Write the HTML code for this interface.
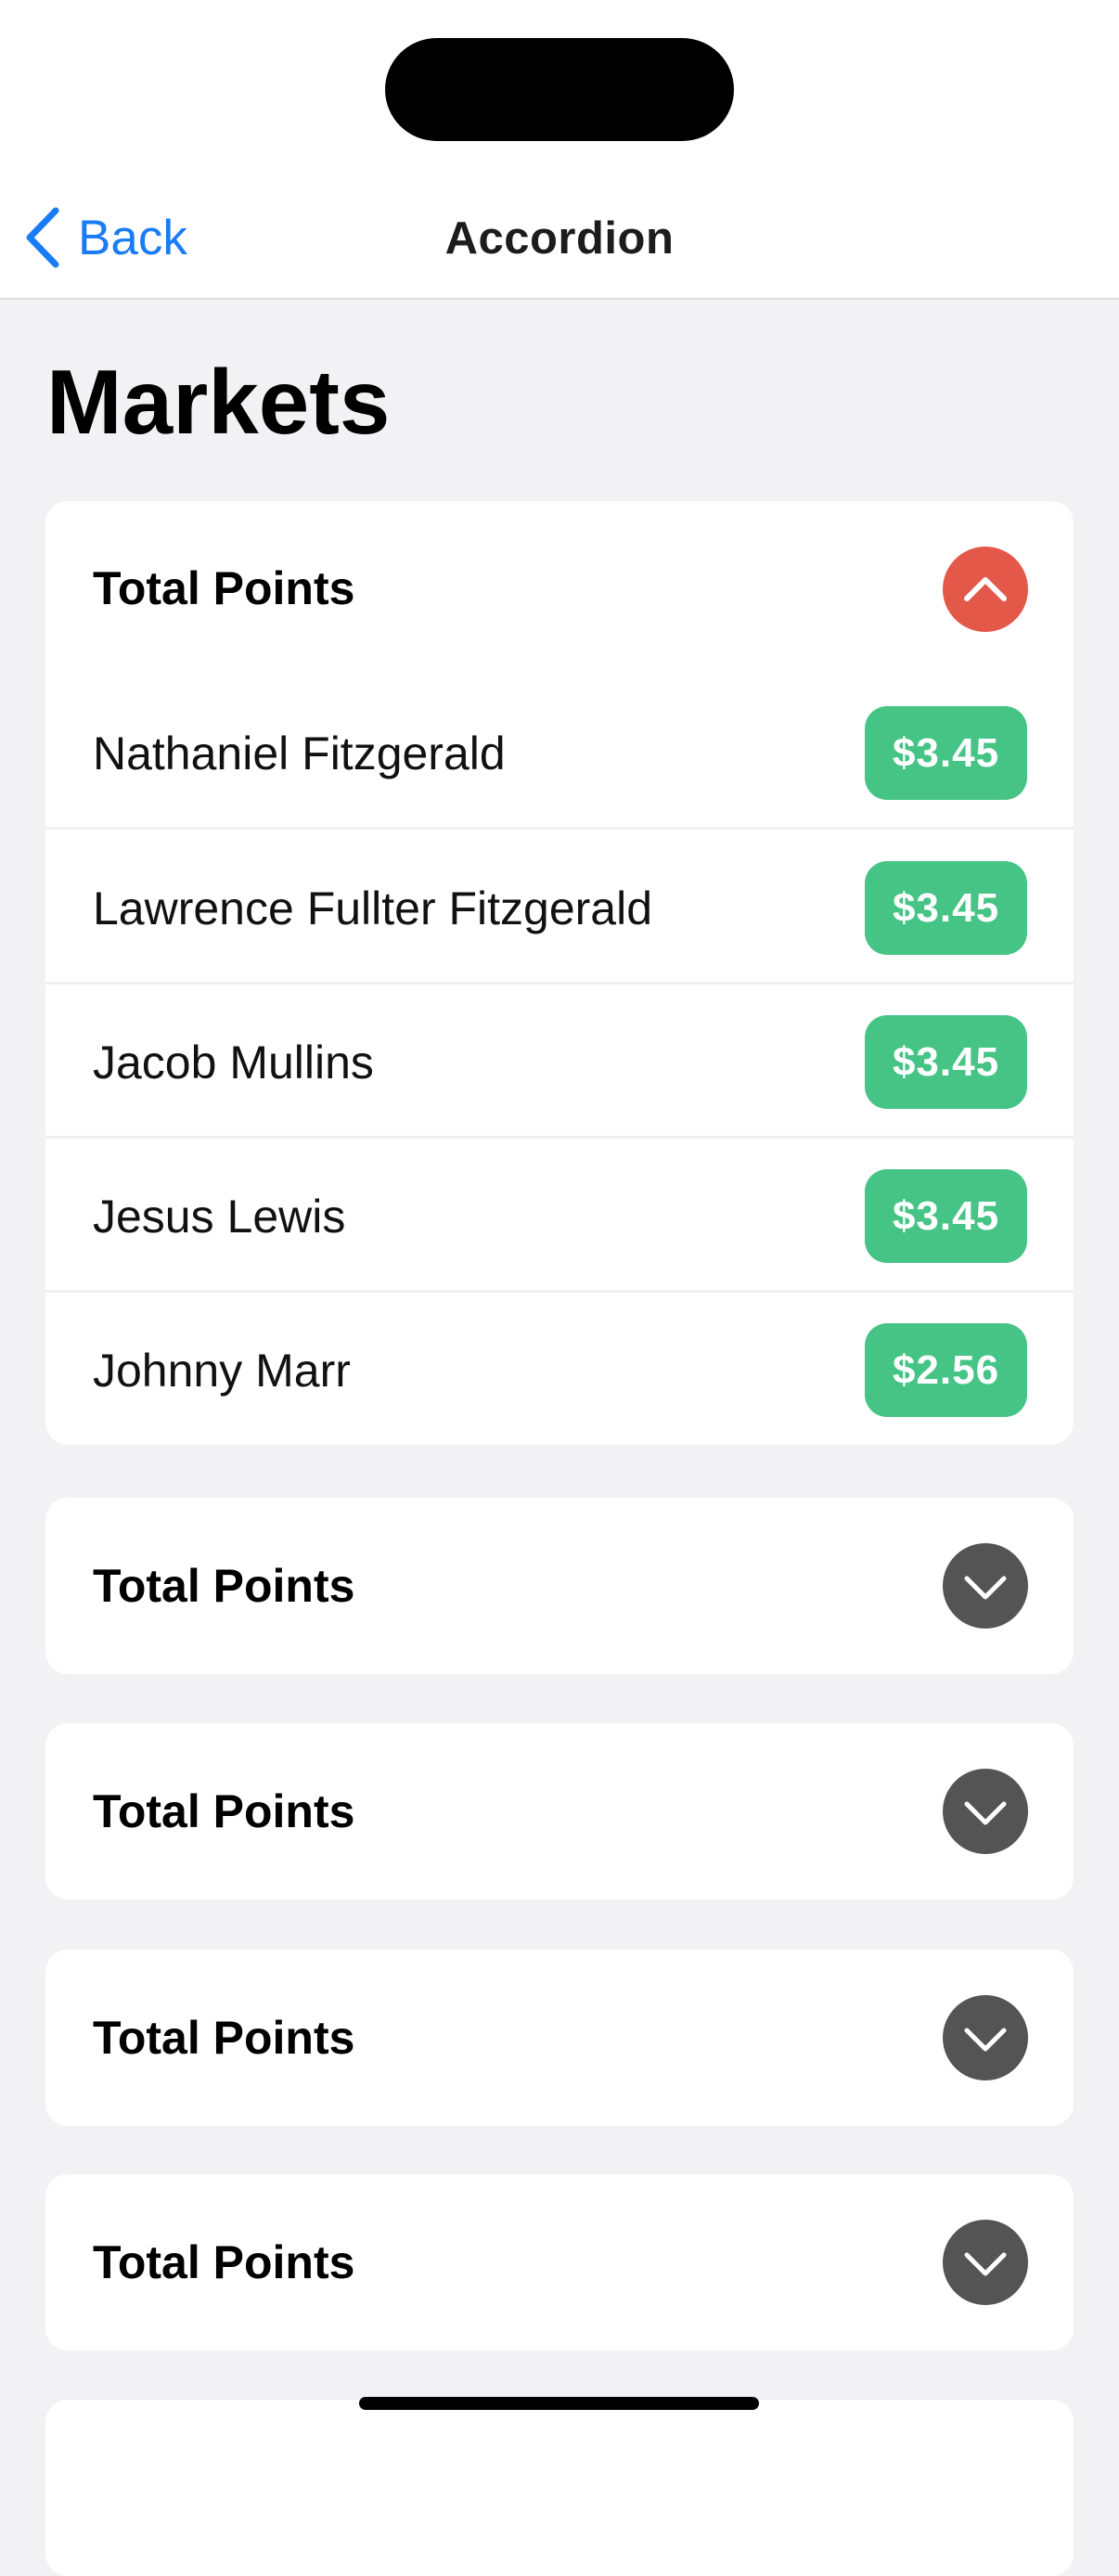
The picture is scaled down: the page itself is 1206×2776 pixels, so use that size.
<!DOCTYPE html>
<html><head><meta charset="utf-8"><style>
*{margin:0;padding:0;box-sizing:border-box}
body{width:1206px;height:2622px;position:relative;overflow:hidden;background:#f2f2f4;font-family:"Liberation Sans",sans-serif;}
.top{position:absolute;left:0;top:0;width:1206px;height:323px;background:#fff;border-bottom:2px solid #dcdcde}
.island{position:absolute;left:415px;top:41px;width:376px;height:111px;border-radius:56px;background:#000}
.back{position:absolute;left:84px;top:226px;font-size:53px;color:#1a7cf5;line-height:62px}
.title{position:absolute;left:0;width:1206px;text-align:center;top:226px;font-size:49px;font-weight:bold;color:#1c1c1e;line-height:62px;letter-spacing:0.5px}
.h1{position:absolute;left:50px;top:378px;font-size:98px;font-weight:bold;color:#000;line-height:110px}
.card{position:absolute;left:49px;width:1108px;background:#fff;border-radius:24px;overflow:hidden}
.hdr{position:absolute;left:51px;font-size:50px;font-weight:bold;color:#000;line-height:60px}
.circ{position:absolute;left:967px;width:92px;height:92px;border-radius:50%}
.row{position:absolute;left:0;width:1108px;height:166px;border-bottom:3px solid #f0f0f2}
.row span{position:absolute;left:51px;top:54px;font-size:50px;line-height:60px;color:#111}
.pill{position:absolute;left:883px;top:33px;width:175px;height:101px;border-radius:24px;background:#45c486;color:#fff;font-weight:bold;font-size:44px;letter-spacing:1px;text-align:center;line-height:101px}
.home{position:absolute;left:387px;top:2583px;width:431px;height:14px;border-radius:7px;background:#000}
</style></head><body>
<div class="top">
<div class="island"></div>
<svg style="position:absolute;left:24px;top:222px" width="44" height="68" viewBox="0 0 44 68"><path d="M36 5 L8 34 L36 63" fill="none" stroke="#1a7cf5" stroke-width="7" stroke-linecap="round" stroke-linejoin="round"/></svg>
<div class="back">Back</div>
<div class="title">Accordion</div>
</div>
<div class="h1">Markets</div>

<div class="card" style="top:540px;height:1017px">
<div class="hdr" style="top:64px">Total Points</div>
<div class="circ" style="top:49px;background:#e4584a"><svg width="92" height="92" viewBox="0 0 92 92"><path d="M26 56 L46 36 L66 56" fill="none" stroke="#fff" stroke-width="6" stroke-linecap="round" stroke-linejoin="round"/></svg></div>
<div class="row" style="top:188px"><span>Nathaniel Fitzgerald</span><div class="pill">$3.45</div></div>
<div class="row" style="top:355px"><span>Lawrence Fullter Fitzgerald</span><div class="pill">$3.45</div></div>
<div class="row" style="top:521px"><span>Jacob Mullins</span><div class="pill">$3.45</div></div>
<div class="row" style="top:687px"><span>Jesus Lewis</span><div class="pill">$3.45</div></div>
<div class="row" style="top:853px;border-bottom:none"><span>Johnny Marr</span><div class="pill">$2.56</div></div>
</div>

<div class="card" style="top:1614px;height:190px"><div class="hdr" style="top:65px">Total Points</div><div class="circ" style="top:49px;background:#545454"><svg width="92" height="92" viewBox="0 0 92 92"><path d="M26 38 L46 58 L66 38" fill="none" stroke="#fff" stroke-width="5" stroke-linecap="round" stroke-linejoin="round"/></svg></div></div>
<div class="card" style="top:1857px;height:190px"><div class="hdr" style="top:65px">Total Points</div><div class="circ" style="top:49px;background:#545454"><svg width="92" height="92" viewBox="0 0 92 92"><path d="M26 38 L46 58 L66 38" fill="none" stroke="#fff" stroke-width="5" stroke-linecap="round" stroke-linejoin="round"/></svg></div></div>
<div class="card" style="top:2101px;height:190px"><div class="hdr" style="top:65px">Total Points</div><div class="circ" style="top:49px;background:#545454"><svg width="92" height="92" viewBox="0 0 92 92"><path d="M26 38 L46 58 L66 38" fill="none" stroke="#fff" stroke-width="5" stroke-linecap="round" stroke-linejoin="round"/></svg></div></div>
<div class="card" style="top:2343px;height:190px"><div class="hdr" style="top:65px">Total Points</div><div class="circ" style="top:49px;background:#545454"><svg width="92" height="92" viewBox="0 0 92 92"><path d="M26 38 L46 58 L66 38" fill="none" stroke="#fff" stroke-width="5" stroke-linecap="round" stroke-linejoin="round"/></svg></div></div>
<div class="card" style="top:2586px;height:190px"></div>
<div class="home"></div>
</body></html>
